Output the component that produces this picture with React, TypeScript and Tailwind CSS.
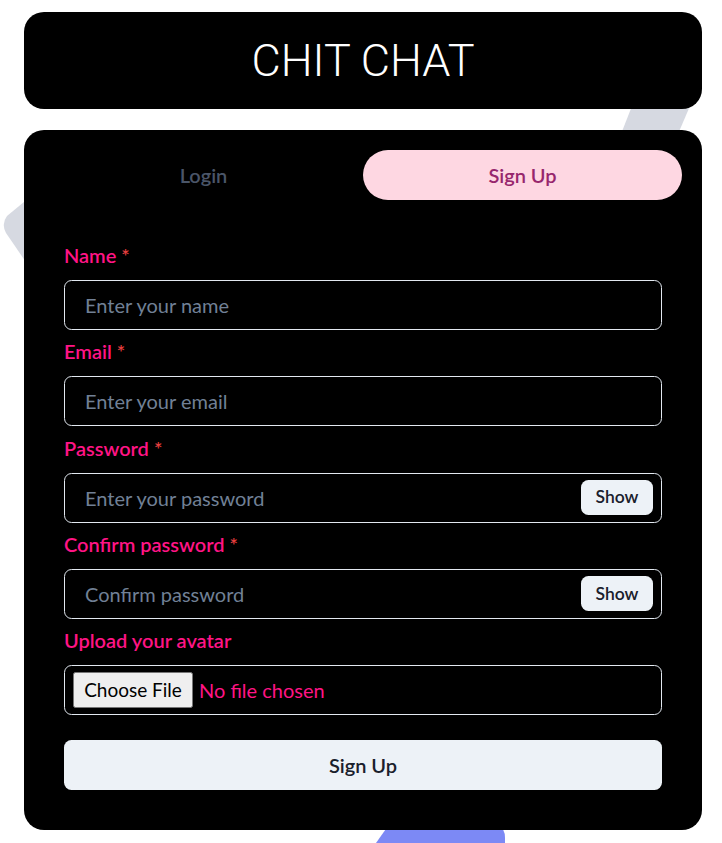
import React, { useState } from "react";

const font = { fontFamily: '"Lato", "Noto Sans", sans-serif' };

function Field({
  label,
  required,
  children,
}: {
  label: string;
  required?: boolean;
  children: React.ReactNode;
}) {
  return (
    <div className="flex flex-col">
      <label className="mb-[10px] h-[30px] text-[20px] leading-[31px] font-semibold text-[#ff1485]">
        {label}
        {required && <span className="ml-[5px] text-[#e53e3e]">*</span>}
      </label>
      {children}
    </div>
  );
}

const inputCls =
  "h-[50px] w-full rounded-[7.5px] border border-[#e2e8f0] bg-transparent px-[20px] text-[20px] text-white outline-none placeholder:text-[#718096]";

function PasswordInput({ placeholder }: { placeholder: string }) {
  const [show, setShow] = useState(false);
  return (
    <div className="relative">
      <input
        type={show ? "text" : "password"}
        placeholder={placeholder}
        className={inputCls + " pr-[90px]"}
      />
      {/* right element */}
      <div className="absolute top-0 right-0 flex h-[50px] w-[90px] items-center justify-center">
        <button
          onClick={() => setShow(!show)}
          className="h-[35px] rounded-[7.5px] bg-[#edf2f7] px-[15px] text-[17.5px] font-semibold text-[#1a202c]"
        >
          {show ? "Hide" : "Show"}
        </button>
      </div>
    </div>
  );
}

export default function App() {
  const [tab, setTab] = useState(1);

  return (
    <div className="relative min-h-screen overflow-hidden bg-white" style={font}>
      {/* background art peeking around the boxes */}
      <svg className="absolute inset-0 h-[843px] w-[722px]" viewBox="0 0 722 843">
        <polygon points="632,106 690,106 678,134 621,134" fill="#d6d9e1" />
        <path d="M30 197 L7 216 Q1 224 6 233 L30 268 Z" fill="#d6d9e1" />
        <path d="M388 826 L498 826 Q505 828 505 838 L505 843 L376 843 Z" fill="#7c89f5" />
      </svg>

      <div className="relative ml-[24px] w-[678px] pt-[12px] pb-[13px]">
        {/* Header */}
        <div className="flex h-[97px] items-center justify-center rounded-[20px] bg-black">
          <h1
            className="text-[45px] font-light text-white"
            style={{ fontFamily: '"Roboto", "Liberation Sans", sans-serif' }}
          >
            CHIT CHAT
          </h1>
        </div>

        {/* Card */}
        <div className="mt-[21px] rounded-[20px] bg-black p-[20px]">
          <div className="flex">
            {["Login", "Sign Up"].map((t, i) => (
              <button
                key={t}
                onClick={() => setTab(i)}
                className={
                  "h-[50px] flex-1 rounded-full text-[20px] font-semibold " +
                  (tab === i ? "bg-[#fed7e2] text-[#97266d]" : "text-[#4a5568]")
                }
              >
                {t}
              </button>
            ))}
          </div>

          <div className="flex flex-col px-[20px] pt-[40px] pb-[20px]">
            <div className="flex flex-col gap-[6.25px]">
              <Field label="Name" required>
                <input placeholder="Enter your name" className={inputCls} />
              </Field>
              <Field label="Email" required>
                <input type="email" placeholder="Enter your email" className={inputCls} />
              </Field>
              <Field label="Password" required>
                <PasswordInput placeholder="Enter your password" />
              </Field>
              <Field label="Confirm password" required>
                <PasswordInput placeholder="Confirm password" />
              </Field>
              <Field label="Upload your avatar">
                <label className="flex h-[50px] w-full cursor-pointer items-center rounded-[7.5px] border border-[#e2e8f0] px-[8px]">
                  <span className="flex h-[36px] w-[120px] items-center justify-center rounded-[2.5px] border border-[#767676] bg-[#efefef] text-[19px] text-black">
                    Choose File
                  </span>
                  <span className="ml-[6px] text-[20px] text-[#ff1485]">No file chosen</span>
                  <input type="file" accept="image/*" className="hidden" />
                </label>
              </Field>
            </div>

            <button className="mt-[25px] h-[50px] w-full rounded-[7.5px] bg-[#edf2f7] text-[20px] font-semibold text-[#1a202c]">
              Sign Up
            </button>
          </div>
        </div>
      </div>
    </div>
  );
}
